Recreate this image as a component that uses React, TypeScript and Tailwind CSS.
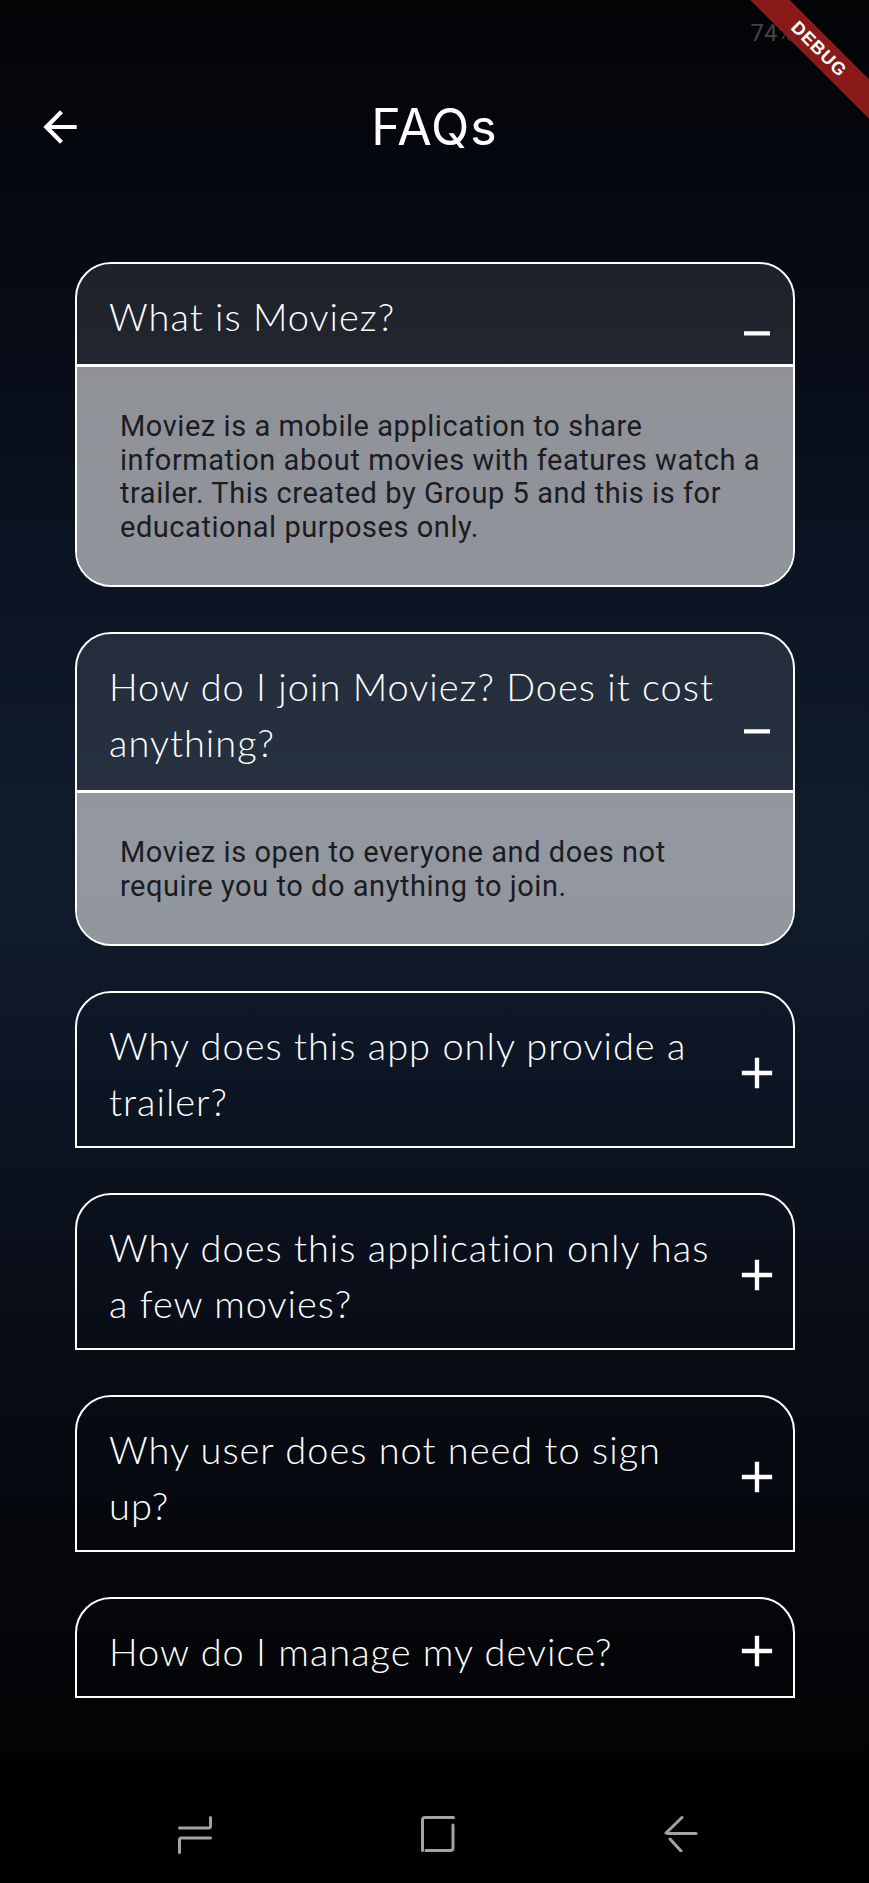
import React from "react";

const PlusIcon = () => (
  <svg width="52" height="52" viewBox="0 0 24 24" fill="white" className="shrink-0">
    <path d="M19 13h-6v6h-2v-6H5v-2h6V5h2v6h6v2z" />
  </svg>
);

const MinusIcon = () => (
  <svg width="52" height="52" viewBox="0 0 24 24" fill="white" className="shrink-0">
    <path d="M6 19h12v2H6z" />
  </svg>
);

const BackArrow = () => (
  <svg width="50" height="50" viewBox="0 0 24 24" fill="white">
    <path d="M20 11H7.83l5.59-5.59L12 4l-8 8 8 8 1.41-1.41L7.83 13H20v-2z" />
  </svg>
);

type Item = { q: string[]; a?: string[] };

const items: Item[] = [
  {
    q: ["What is Moviez?"],
    a: [
      "Moviez is a mobile application to share",
      "information about movies with features watch a",
      "trailer. This created by Group 5 and this is for",
      "educational purposes only.",
    ],
  },
  {
    q: ["How do I join Moviez? Does it cost", "anything?"],
    a: ["Moviez is open to everyone and does not", "require you to do anything to join."],
  },
  { q: ["Why does this app only provide a", "trailer?"] },
  { q: ["Why does this application only has", "a few movies?"] },
  { q: ["Why user does not need to sign", "up?"] },
  { q: ["How do I manage my device?"] },
];

function Lines({ lines }: { lines: string[] }) {
  return (
    <>
      {lines.map((l, i) => (
        <div key={i} className="whitespace-nowrap">
          {l}
        </div>
      ))}
    </>
  );
}

function Card({ item }: { item: Item }) {
  const titleCls =
    "flex-1 text-white font-['Lato','Open_Sans',sans-serif] font-light text-[38px] leading-[56px] tracking-[1px]";
  if (item.a) {
    return (
      <div className="rounded-[36px] border-2 border-white overflow-hidden">
        <div className="flex items-center bg-[#ffffff1a] pl-[32px] pr-[10px] pt-[24px] pb-[20px]">
          <div className={titleCls}>
            <Lines lines={item.q} />
          </div>
          <MinusIcon />
        </div>
        <div className="h-[3px] bg-white" />
        <div className="bg-[#ffffff8c] pl-[43px] pr-[10px] pt-[43px] pb-[41px] text-[#1a1c21] font-['Roboto',sans-serif] text-[29px] leading-[33.5px] tracking-[0.55px]">
          <Lines lines={item.a} />
        </div>
      </div>
    );
  }
  return (
    <div className="rounded-t-[36px] border-2 border-white">
      <div className="flex items-center pl-[32px] pr-[10px] pt-[24px] pb-[17px]">
        <div className={titleCls}>
          <Lines lines={item.q} />
        </div>
        <PlusIcon />
      </div>
    </div>
  );
}

export default function App() {
  return (
    <div className="relative w-[869px] h-[1883px] overflow-hidden flex flex-col bg-black">
      <div className="flex-1 flex flex-col bg-[linear-gradient(to_bottom,#030406_0%,#060a13_15%,#0c1626_36%,#0f1b2d_48%,#0e1828_57%,#090e18_74%,#05070c_88%,#020304_100%)]">
        {/* status bar */}
        <div className="h-[72px] flex justify-end items-start pt-[18px] pr-[58px]">
          <span className="font-['Roboto',sans-serif] text-[24px] text-[#454545] leading-[30px]">74%</span>
          <div className="ml-[4px] mt-[6px] w-[12px] h-[20px] border-2 border-[#454545] rounded-[2px]" />
        </div>
        {/* app bar */}
        <div className="relative h-[110px] flex items-center justify-center">
          <div className="absolute left-[35px] top-[30px]">
            <BackArrow />
          </div>
          <div className="text-white font-['Inter',sans-serif] text-[50px] leading-[56px] font-normal tracking-[1px]">FAQs</div>
        </div>
        {/* list */}
        <div className="flex flex-col gap-[45px] pt-[80px] pl-[75px] pr-[74px]">
          {items.map((it, i) => (
            <Card key={i} item={it} />
          ))}
        </div>
      </div>
      {/* nav bar */}
      <div className="h-[123px] bg-black flex items-start pt-[56px] pl-[178px] gap-[209px]">
        <svg width="34" height="38" viewBox="0 0 34 38" fill="none" stroke="#a3a3a3" strokeWidth="3" strokeLinecap="round">
          <path d="M32.5 1.5 V10 Q32.5 12 30.5 12 H1.5" />
          <path d="M32.5 22 H3.5 Q1.5 22 1.5 24 V36.5" />
        </svg>
        <svg width="34" height="36" viewBox="0 0 34 36" fill="none" stroke="#a3a3a3" strokeWidth="3" strokeLinecap="round">
          <path d="M1.5 34.5 V4 Q1.5 1.5 4 1.5 H32.5" />
          <path d="M32 9 V32 Q32 34.5 29.5 34.5 H5" />
        </svg>
        <svg width="34" height="36" viewBox="0 0 34 36" fill="none" stroke="#a3a3a3" strokeWidth="3" strokeLinecap="round">
          <path d="M18 1.5 L2 17" />
          <path d="M4 17.5 H32" />
          <path d="M6 23 L17 35" />
        </svg>
      </div>
      {/* debug banner */}
      <div className="absolute left-[719px] top-[35px] w-[200px] h-[28px] rotate-45 bg-[#8a1a1a] flex items-center justify-center shadow-[0_1px_3px_rgba(0,0,0,0.5)]">
        <span className="text-white font-['Liberation_Sans',sans-serif] font-bold text-[18px] tracking-[1px] leading-none">DEBUG</span>
      </div>
    </div>
  );
}
